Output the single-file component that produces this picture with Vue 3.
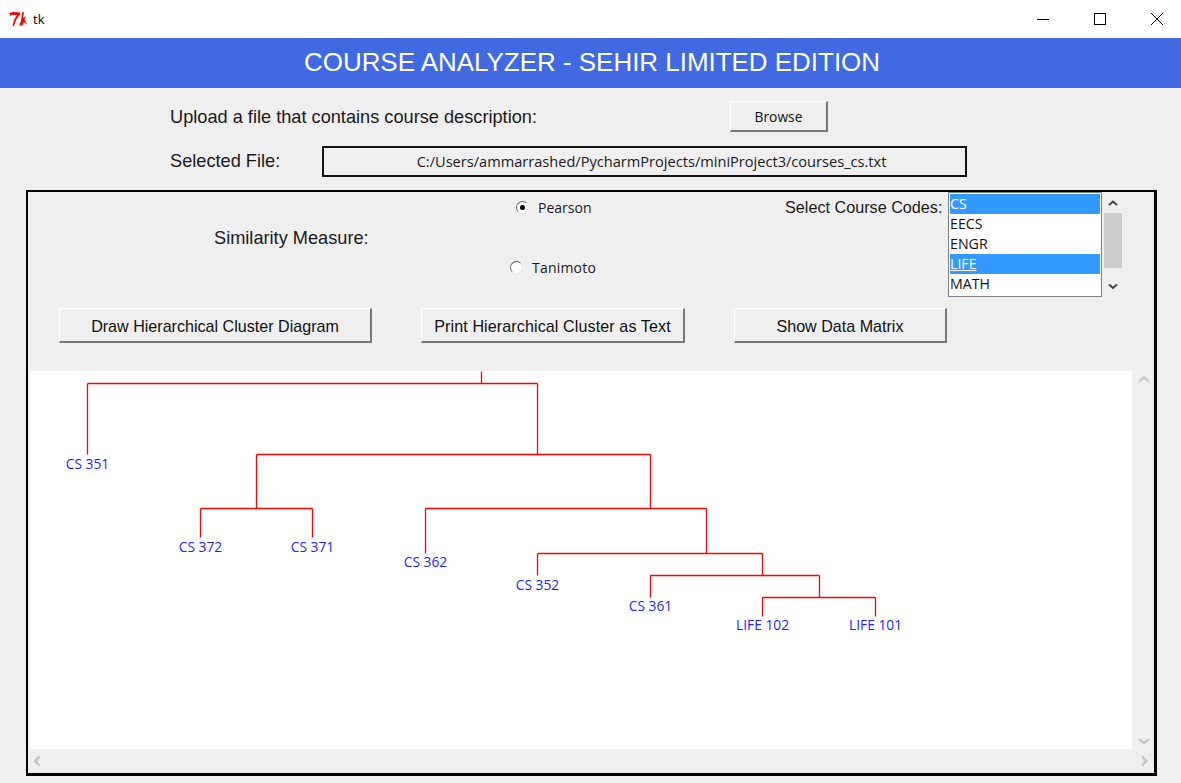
<script setup>
const originX = 30
const originY = 371
const segments = [
  [481, 371, 481, 383], [87, 383, 537, 383], [87, 383, 87, 454], [537, 383, 537, 454],
  [256, 454, 650, 454], [256, 454, 256, 508], [650, 454, 650, 508],
  [200, 508, 312, 508], [200, 508, 200, 537], [312, 508, 312, 537],
  [425, 508, 706, 508], [425, 508, 425, 553], [706, 508, 706, 553],
  [537, 553, 762, 553], [537, 553, 537, 575], [762, 553, 762, 575],
  [650, 575, 819, 575], [650, 575, 650, 597], [819, 575, 819, 597],
  [762, 597, 875, 597], [762, 597, 762, 616], [875, 597, 875, 616]
].map(([a, b, c, d]) => [a - originX + 0.5, b - originY + 0.5, c - originX + 0.5, d - originY + 0.5])
const labels = [
  ['CS 351', 87, 464], ['CS 372', 200, 547], ['CS 371', 312, 547], ['CS 362', 425, 562],
  ['CS 352', 537, 585], ['CS 361', 650, 606], ['LIFE 102', 762, 625], ['LIFE 101', 875, 625]
].map(([t, x, y]) => ({ t, x: x - originX + 0.5, y: y - originY + 5 }))
const codes = [
  { name: 'CS', on: true }, { name: 'EECS' }, { name: 'ENGR' },
  { name: 'LIFE', on: true, active: true }, { name: 'MATH' }
]
</script>

<template>
  <div class="window">
    <div class="titlebar">
      <svg class="logo" width="19" height="16" viewBox="0 0 19 16">
        <path d="M0.5 2 L4 1 L11 1.5 L11 3.5 L7 9 L5 15 L3.5 15 L5 9 L8 4 L3 4 L1 5 Z" fill="#f00" />
        <path d="M13 1.5 L15 1 L14 7 L17 5 L15.5 8.5 L18.5 14 L15 11 L13.5 14.5 L10 14.5 L12 10 Z" fill="#f00" />
      </svg>
      <span class="tk">tk</span>
      <div class="controls">
        <svg width="14" height="14" viewBox="0 0 14 14"><path d="M1 7.5H13" stroke="#000" /></svg>
        <svg width="14" height="14" viewBox="0 0 14 14"><rect x="1.5" y="1.5" width="11" height="11" fill="none" stroke="#000" /></svg>
        <svg width="14" height="14" viewBox="0 0 14 14"><path d="M1 1L13 13M13 1L1 13" stroke="#000" /></svg>
      </div>
    </div>
    <header class="banner">COURSE ANALYZER - SEHIR LIMITED EDITION</header>

    <div class="upload-row">
      <span class="big-label">Upload a file that contains course description:</span>
      <button class="btn browse">Browse</button>
    </div>
    <div class="file-row">
      <span class="big-label file-label">Selected File:</span>
      <div class="file-box">C:/Users/ammarrashed/PycharmProjects/miniProject3/courses_cs.txt</div>
    </div>

    <section class="panel">
      <div class="options">
        <div class="measure big-label">Similarity Measure:</div>
        <div class="radios">
          <label class="radio pearson"><span class="dot on"></span>Pearson</label>
          <label class="radio tanimoto"><span class="dot"></span>Tanimoto</label>
        </div>
        <div class="codes-label big-label small">Select Course Codes:</div>
        <ul class="listbox">
          <li v-for="c in codes" :key="c.name" :class="{ on: c.on }"><span :class="{ active: c.active }">{{ c.name }}</span></li>
        </ul>
        <div class="list-scroll">
          <svg width="18" height="21" viewBox="0 0 18 21"><path d="M5 13L9 9.5L13 13" fill="none" stroke="#444" stroke-width="2" /></svg>
          <div class="list-thumb"></div>
          <svg width="18" height="29" viewBox="0 0 18 29"><path d="M5 16.5L9 20L13 16.5" fill="none" stroke="#444" stroke-width="2" /></svg>
        </div>
      </div>

      <div class="actions">
        <button class="btn draw">Draw Hierarchical Cluster Diagram</button>
        <button class="btn print">Print Hierarchical Cluster as Text</button>
        <button class="btn matrix">Show Data Matrix</button>
      </div>

      <div class="canvas-area">
        <svg class="canvas" width="1102" height="378" viewBox="0 0 1102 378">
          <line v-for="(s, i) in segments" :key="i" :x1="s[0]" :y1="s[1]" :x2="s[2]" :y2="s[3]" stroke="#f00" stroke-width="1.3" />
          <text v-for="l in labels" :key="l.t" :x="l.x" :y="l.y" text-anchor="middle" class="node">{{ l.t }}</text>
        </svg>
        <div class="v-scroll">
          <svg width="22" height="16" viewBox="0 0 22 16"><path d="M6 10.5L11 6.5L16 10.5" fill="none" stroke="#c8c8c8" stroke-width="2.5" /></svg>
          <svg width="22" height="16" viewBox="0 0 22 16"><path d="M6 6L11 10L16 6" fill="none" stroke="#c8c8c8" stroke-width="2.5" /></svg>
        </div>
      </div>
      <div class="h-scroll">
        <svg width="16" height="22" viewBox="0 0 16 22"><path d="M10.5 6.5L6 11L10.5 15.5" fill="none" stroke="#c8c8c8" stroke-width="2.5" /></svg>
        <svg width="16" height="22" viewBox="0 0 16 22"><path d="M7 6.5L11.5 11L7 15.5" fill="none" stroke="#c8c8c8" stroke-width="2.5" /></svg>
      </div>
    </section>
  </div>
</template>

<style>
html, body { margin: 0; background: #efefef; }
</style>

<style scoped>
.window {
  width: 1181px;
  height: 783px;
  overflow: hidden;
  background: #efefef;
  font-family: "Noto Sans", "Open Sans", sans-serif;
  color: #000;
}
.titlebar {
  height: 38px;
  background: #fff;
  display: flex;
  align-items: center;
  padding-left: 9px;
  box-sizing: border-box;
}
.logo { margin-right: 5px; }
.tk { font-family: "Open Sans", sans-serif; font-size: 13px; }
.controls {
  margin-left: auto;
  display: flex;
  gap: 43px;
  padding-right: 17px;
}
.banner {
  height: 50px;
  line-height: 49px;
  background: #4169e1;
  color: #fff;
  text-align: center;
  font-family: "Liberation Sans", Arial, sans-serif;
  font-size: 25.95px;
  padding-left: 3px;
}
.big-label {
  font-family: "Liberation Sans", Arial, sans-serif;
  font-size: 18.2px;
  color: #1a1a1a;
}
.big-label.small { font-size: 16.2px; }
.btn {
  box-sizing: border-box;
  height: 100%;
  padding: 2px 0 0;
  background: #efefef;
  border: 1px solid #fff;
  border-right: 2px solid #777;
  border-bottom: 2px solid #777;
  font-family: "Liberation Sans", Arial, sans-serif;
  font-size: 16.1px;
  color: #111;
}
.upload-row {
  height: 31px;
  margin-top: 13px;
  padding-left: 170px;
  display: flex;
  align-items: center;
}
.upload-row .big-label { padding-top: 2px; }
.browse {
  width: 98px;
  margin-left: 193px;
  padding: 0;
  font-family: "Open Sans", sans-serif;
  font-size: 13.8px;
}
.file-row {
  height: 31px;
  margin-top: 14px;
  padding-left: 170px;
  display: flex;
  align-items: center;
}
.file-label { width: 152px; }
.file-box {
  box-sizing: border-box;
  width: 645px;
  height: 31px;
  padding-left: 14px;
  border: 2px solid #111;
  text-align: center;
  line-height: 27px;
  font-size: 14.6px;
  font-family: "Open Sans", sans-serif;
  color: #1a1a1a;
}
.panel {
  box-sizing: border-box;
  width: 1131px;
  height: 586px;
  margin: 13px 0 0 26px;
  border: 2px solid #000;
  border-width: 2px 3px 3px 2px;
}
.options {
  height: 106px;
  display: flex;
  position: relative;
}
.measure {
  width: 261px;
  padding: 36px 0 0 186px;
  height: 20px;
  flex: none;
}
.radios {
  width: 0;
  flex: 1;
  font-family: "Open Sans", sans-serif;
  font-size: 14px;
}
.radio {
  display: flex;
  align-items: center;
  color: #1a1a1a;
  height: 20px;
}
.pearson { margin: 5px 0 0 41px; gap: 9px; }
.tanimoto { margin: 40px 0 0 35px; gap: 9px; letter-spacing: 0.2px; }
.dot {
  box-sizing: border-box;
  width: 13px;
  height: 13px;
  border-radius: 50%;
  background: #fff;
  border: 1.5px solid;
  border-color: #666 #e4e4e4 #e4e4e4 #666;
  display: flex;
  align-items: center;
  justify-content: center;
  flex: none;
}
.dot.on::after {
  content: "";
  width: 5px;
  height: 5px;
  border-radius: 50%;
  background: #000;
}
.codes-label {
  position: absolute;
  left: 757px;
  top: 6px;
}
.listbox {
  box-sizing: border-box;
  list-style: none;
  margin: 0;
  padding: 1px;
  width: 154px;
  height: 105px;
  flex: none;
  background: #fff;
  border: 1px solid #808080;
  font-family: "Open Sans", sans-serif;
  font-size: 14.2px;
  line-height: 20px;
  color: #111;
}
.listbox li { height: 20px; }
.listbox li.on { background: #3399ff; color: #fff; }
.active { text-decoration: underline; }
.list-scroll {
  width: 18px;
  margin: 0 32px 0 2px;
  flex: none;
  display: flex;
  flex-direction: column;
}
.list-thumb { height: 55px; background: #cdcdcd; }
.actions {
  height: 35px;
  margin-top: 10px;
  padding-left: 31px;
  display: flex;
}
.draw { width: 313px; }
.print { width: 264px; margin-left: 49px; letter-spacing: 0.1px; }
.matrix { width: 213px; margin-left: 49px; }
.canvas-area {
  height: 378px;
  margin-top: 28px;
  padding-left: 2px;
  display: flex;
}
.canvas { background: #fff; display: block; flex: none; }
.node {
  fill: #1f1fff;
  font-family: "Open Sans", sans-serif;
  font-size: 13.8px;
}
.v-scroll {
  width: 22px;
  margin-left: 1px;
  display: flex;
  flex-direction: column;
  justify-content: space-between;
}
.h-scroll {
  height: 22px;
  margin-top: 1px;
  padding: 0 3px 0 1px;
  display: flex;
  justify-content: space-between;
}
</style>
